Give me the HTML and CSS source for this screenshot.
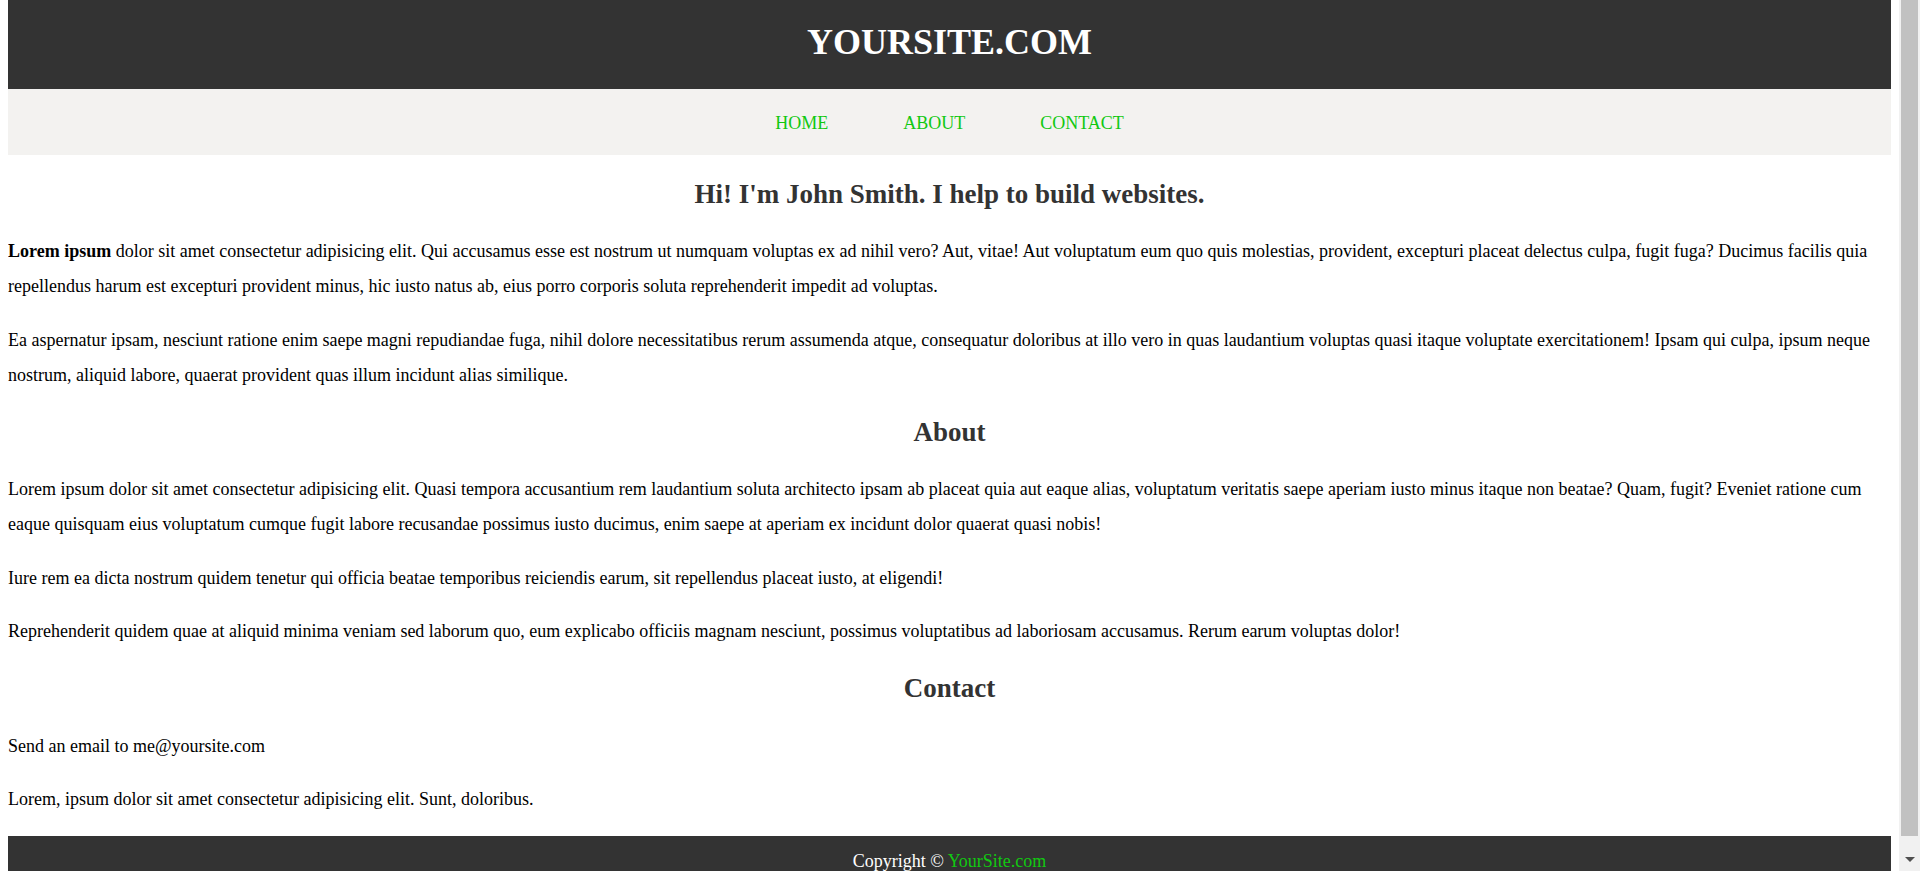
FILE: index.html
```html
<!DOCTYPE html>
<html lang="en">
<head>
<meta charset="utf-8">
<title>YourSite.com</title>
<link rel="stylesheet" href="styles.css">
</head>
<body>
<header class="site-header">
  <h1 class="logo">YOURSITE.COM</h1>
</header>
<nav class="site-nav">
  <ul class="nav-list">
    <li><a class="nav-link" href="#home">HOME</a></li>
    <li><a class="nav-link" href="#about">ABOUT</a></li>
    <li><a class="nav-link" href="#contact">CONTACT</a></li>
  </ul>
</nav>
<main class="content">
  <section class="section" id="home">
    <h2 class="section-title">Hi! I'm John Smith. I help to build websites.</h2>
    <p class="text"><strong>Lorem ipsum</strong> dolor sit amet consectetur adipisicing elit. Qui accusamus esse est nostrum ut numquam voluptas ex ad nihil vero? Aut, vitae! Aut voluptatum eum quo quis molestias, provident, excepturi placeat delectus culpa, fugit fuga? Ducimus facilis quia repellendus harum est excepturi provident minus, hic iusto natus ab, eius porro corporis soluta reprehenderit impedit ad voluptas.</p>
    <p class="text">Ea aspernatur ipsam, nesciunt ratione enim saepe magni repudiandae fuga, nihil dolore necessitatibus rerum assumenda atque, consequatur doloribus at illo vero in quas laudantium voluptas quasi itaque voluptate exercitationem! Ipsam qui culpa, ipsum neque nostrum, aliquid labore, quaerat provident quas illum incidunt alias similique.</p>
  </section>
  <section class="section" id="about">
    <h2 class="section-title">About</h2>
    <p class="text">Lorem ipsum dolor sit amet consectetur adipisicing elit. Quasi tempora accusantium rem laudantium soluta architecto ipsam ab placeat quia aut eaque alias, voluptatum veritatis saepe aperiam iusto minus itaque non beatae? Quam, fugit? Eveniet ratione cum eaque quisquam eius voluptatum cumque fugit labore recusandae possimus iusto ducimus, enim saepe at aperiam ex incidunt dolor quaerat quasi nobis!</p>
    <p class="text">Iure rem ea dicta nostrum quidem tenetur qui officia beatae temporibus reiciendis earum, sit repellendus placeat iusto, at eligendi!</p>
    <p class="text">Reprehenderit quidem quae at aliquid minima veniam sed laborum quo, eum explicabo officiis magnam nesciunt, possimus voluptatibus ad laboriosam accusamus. Rerum earum voluptas dolor!</p>
  </section>
  <section class="section" id="contact">
    <h2 class="section-title">Contact</h2>
    <p class="text">Send an email to me@yoursite.com</p>
    <p class="text">Lorem, ipsum dolor sit amet consectetur adipisicing elit. Sunt, doloribus.</p>
  </section>
</main>
<footer class="site-footer">
  <p class="copyright">Copyright &copy; <a class="footer-link" href="#home">YourSite.com</a></p>
</footer>
<div class="scrollbar" aria-hidden="true">
  <div class="scrollbar-thumb"></div>
  <div class="scrollbar-arrow"></div>
</div>
</body>
</html>
```
FILE: styles.css
```css
html {
  background: #fff;
}

body {
  margin: 0 29px 8px 8px;
  font-family: "Liberation Serif", "Times New Roman", serif;
  font-size: 18px;
  line-height: 35px;
  color: #000;
}

.site-header {
  background: #333;
  padding: 22px 0 26px;
  text-align: center;
}

.logo {
  margin: 0;
  font-size: 36px;
  line-height: 41px;
  font-weight: bold;
  color: #fff;
}

.site-nav {
  background: #f3f2f0;
  padding: 17px 0 14px;
}

.nav-list {
  list-style: none;
  margin: 0;
  padding: 0;
  display: flex;
  justify-content: center;
  gap: 75px;
}

.nav-link {
  color: #11c811;
  text-decoration: none;
}

.content {
  display: block;
}

.section-title {
  margin: 22.2px 0;
  font-size: 27px;
  font-weight: bold;
  color: #333;
  text-align: center;
}

.text {
  margin: 18.5px 0;
}

.site-footer {
  background: #333;
  padding: 8px 0;
  text-align: center;
  color: #fff;
}

.copyright {
  margin: 0;
}

.footer-link {
  color: #11c811;
  text-decoration: none;
}

/* imitation of the window's classic vertical scrollbar */
.scrollbar {
  position: fixed;
  top: 0;
  right: 0;
  bottom: 0;
  width: 21px;
  background: #f1f1f1;
  display: flex;
  flex-direction: column;
  align-items: center;
}

.scrollbar-thumb {
  width: 17px;
  height: 836px;
  background: #c1c1c1;
}

.scrollbar-arrow {
  margin-top: 21px;
  width: 0;
  height: 0;
  border-left: 5px solid transparent;
  border-right: 5px solid transparent;
  border-top: 5px solid #505050;
}
```
